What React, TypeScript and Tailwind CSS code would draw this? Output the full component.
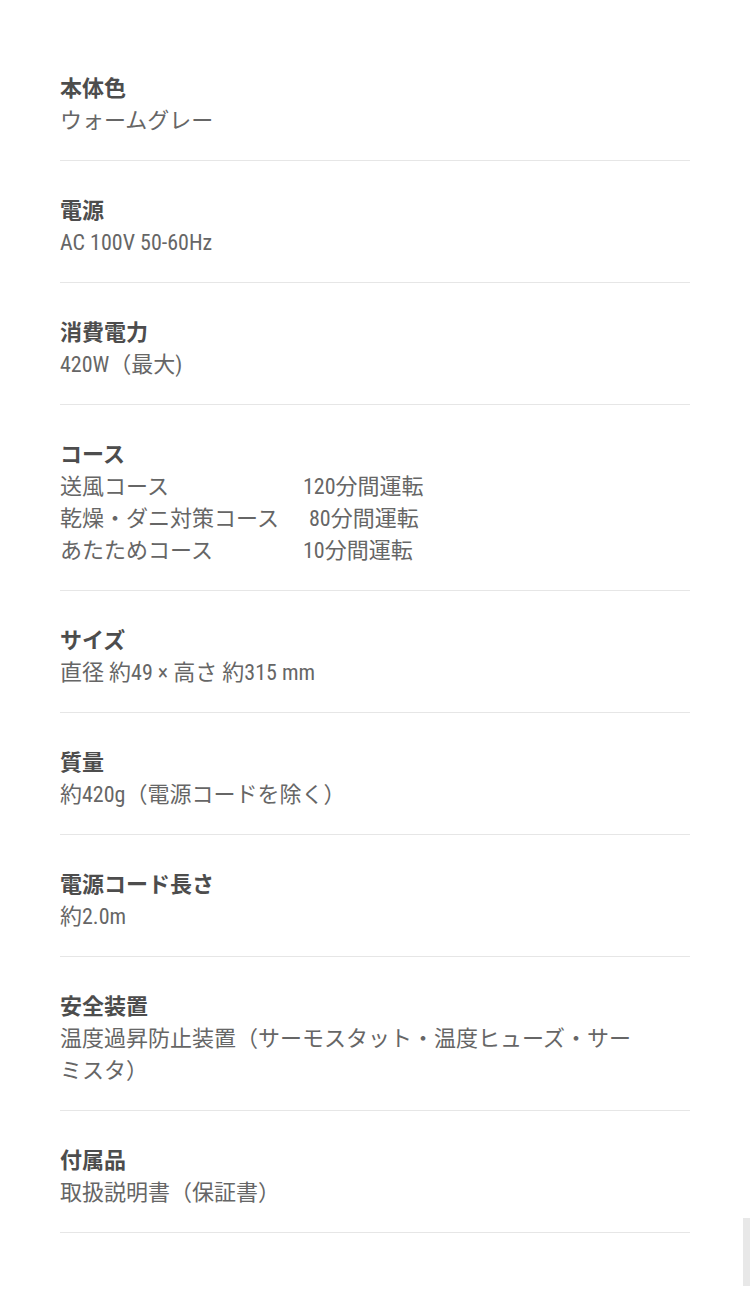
const specs: { label: string; value: React.ReactNode }[] = [
  { label: "本体色", value: "ウォームグレー" },
  { label: "電源", value: "AC 100V 50-60Hz" },
  { label: "消費電力", value: "420W（最大)" },
  {
    label: "コース",
    value: (
      <div className="grid grid-cols-[243px_auto] justify-start">
        <span>送風コース</span>
        <span>120分間運転</span>
        <span>乾燥・ダニ対策コース</span>
        <span className="pl-[6px]">80分間運転</span>
        <span>あたためコース</span>
        <span>10分間運転</span>
      </div>
    ),
  },
  { label: "サイズ", value: "直径 約49 × 高さ 約315 mm" },
  { label: "質量", value: "約420g（電源コードを除く）" },
  { label: "電源コード長さ", value: "約2.0m" },
  { label: "安全装置", value: "温度過昇防止装置（サーモスタット・温度ヒューズ・サーミスタ）" },
  { label: "付属品", value: "取扱説明書（保証書）" },
];

export default function App() {
  return (
    <div className="min-h-[1315px] bg-white font-['Roboto','Noto_Sans_CJK_JP',sans-serif]">
      <div className="px-[60px] pt-[39px]">
        {specs.map((item) => (
          <div key={item.label} className="border-b border-[#e6e6e6] pt-[34px] pb-[23px] text-[22px] leading-[32px]">
            <div className="font-bold text-[#4d4d4d]">{item.label}</div>
            <div className="max-w-[585px] text-[#666666] [font-stretch:87.5%]">{item.value}</div>
          </div>
        ))}
      </div>

      {/* scroll indicator */}
      <div className="fixed right-0 top-[1218px] h-[68px] w-[7px] bg-[#e8e8e8]" />
    </div>
  );
}
